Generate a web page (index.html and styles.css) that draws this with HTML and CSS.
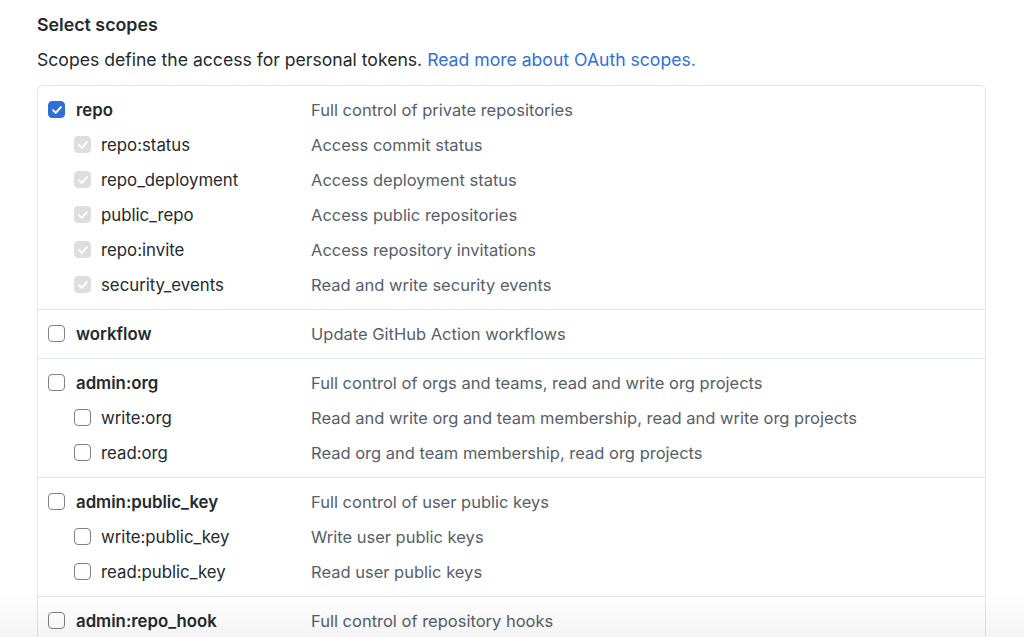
FILE: index.html
```html
<!DOCTYPE html>
<html lang="en">
<head>
<meta charset="utf-8">
<title>Select scopes</title>
<link rel="stylesheet" href="styles.css">
</head>
<body>
<main class="page">
  <h2 class="title">Select scopes</h2>
  <p class="lead">Scopes define the access for personal tokens. <a class="link" href="#">Read more about OAuth scopes.</a></p>

  <div class="scopes">
    <div class="group">
      <div class="row main">
        <div class="name"><span class="cb checked"><svg viewBox="0 0 16 16"><path d="M3.6 8.3l3 3 5.8-6.6"/></svg></span><span class="label">repo</span></div>
        <div class="desc">Full control of private repositories</div>
      </div>
      <div class="row sub">
        <div class="name"><span class="cb disabled"><svg viewBox="0 0 16 16"><path d="M3.6 8.3l3 3 5.8-6.6"/></svg></span><span class="label">repo:status</span></div>
        <div class="desc">Access commit status</div>
      </div>
      <div class="row sub">
        <div class="name"><span class="cb disabled"><svg viewBox="0 0 16 16"><path d="M3.6 8.3l3 3 5.8-6.6"/></svg></span><span class="label">repo_deployment</span></div>
        <div class="desc">Access deployment status</div>
      </div>
      <div class="row sub">
        <div class="name"><span class="cb disabled"><svg viewBox="0 0 16 16"><path d="M3.6 8.3l3 3 5.8-6.6"/></svg></span><span class="label">public_repo</span></div>
        <div class="desc">Access public repositories</div>
      </div>
      <div class="row sub">
        <div class="name"><span class="cb disabled"><svg viewBox="0 0 16 16"><path d="M3.6 8.3l3 3 5.8-6.6"/></svg></span><span class="label">repo:invite</span></div>
        <div class="desc">Access repository invitations</div>
      </div>
      <div class="row sub">
        <div class="name"><span class="cb disabled"><svg viewBox="0 0 16 16"><path d="M3.6 8.3l3 3 5.8-6.6"/></svg></span><span class="label">security_events</span></div>
        <div class="desc">Read and write security events</div>
      </div>
    </div>

    <div class="group">
      <div class="row main">
        <div class="name"><span class="cb"></span><span class="label">workflow</span></div>
        <div class="desc">Update GitHub Action workflows</div>
      </div>
    </div>

    <div class="group">
      <div class="row main">
        <div class="name"><span class="cb"></span><span class="label">admin:org</span></div>
        <div class="desc">Full control of orgs and teams, read and write org projects</div>
      </div>
      <div class="row sub">
        <div class="name"><span class="cb"></span><span class="label">write:org</span></div>
        <div class="desc">Read and write org and team membership, read and write org projects</div>
      </div>
      <div class="row sub">
        <div class="name"><span class="cb"></span><span class="label">read:org</span></div>
        <div class="desc">Read org and team membership, read org projects</div>
      </div>
    </div>

    <div class="group">
      <div class="row main">
        <div class="name"><span class="cb"></span><span class="label">admin:public_key</span></div>
        <div class="desc">Full control of user public keys</div>
      </div>
      <div class="row sub">
        <div class="name"><span class="cb"></span><span class="label">write:public_key</span></div>
        <div class="desc">Write user public keys</div>
      </div>
      <div class="row sub">
        <div class="name"><span class="cb"></span><span class="label">read:public_key</span></div>
        <div class="desc">Read user public keys</div>
      </div>
    </div>

    <div class="group">
      <div class="row main">
        <div class="name"><span class="cb"></span><span class="label">admin:repo_hook</span></div>
        <div class="desc">Full control of repository hooks</div>
      </div>
    </div>
  </div>
</main>
<div class="fade"></div>
</body>
</html>
```

FILE: styles.css
```css
html, body {
  margin: 0;
  padding: 0;
  background: #ffffff;
  overflow: hidden;
  height: 637px;
}

body {
  font-family: Inter, "Liberation Sans", Arial, sans-serif;
  color: #24292f;
  font-size: 16px;
}

.page {
  padding: 13px 38px 0 37px;
  width: 949px;
}

.title {
  margin: 0;
  font-size: 17.8px;
  line-height: 24px;
  font-weight: 600;
  color: #24292f;
}

.lead {
  margin: 11px 0 0 0;
  font-size: 17.6px;
  line-height: 24px;
  color: #24292f;
}

.link {
  color: #2f6fdb;
  text-decoration: none;
}

.scopes {
  margin-top: 13px;
  border: 1px solid #e1e4e8;
  border-radius: 6px;
}

.group {
  padding: 6px 0 7px 0;
  border-bottom: 1px solid #e1e4e8;
}

.group:last-child {
  border-bottom: none;
}

.row {
  display: flex;
  align-items: center;
  height: 35px;
  padding-left: 10px;
}

.name {
  display: flex;
  align-items: center;
  width: 263px;
  flex: none;
  box-sizing: border-box;
}

.row.sub .name {
  padding-left: 26px;
}

.label {
  margin-left: 11px;
  font-size: 16.8px;
  color: #24292f;
}

.row.sub .label {
  margin-left: 10px;
}

.row.main .label {
  font-weight: 600;
}

.desc {
  font-size: 16.5px;
  color: #57606a;
}

.cb {
  width: 17px;
  height: 17px;
  box-sizing: border-box;
  border: 1px solid #808080;
  border-radius: 4px;
  background: #ffffff;
  flex: none;
  display: flex;
  align-items: center;
  justify-content: center;
}

.cb svg {
  width: 14px;
  height: 14px;
  fill: none;
  stroke: #ffffff;
  stroke-width: 2.2;
  stroke-linecap: round;
  stroke-linejoin: round;
}

.cb.checked {
  background: #2f6fdb;
  border-color: #2f6fdb;
}

.cb.disabled {
  background: #dedede;
  border-color: #dedede;
}

.fade {
  position: fixed;
  left: 0;
  right: 0;
  bottom: 0;
  height: 44px;
  background: linear-gradient(to bottom, rgba(0, 0, 0, 0), rgba(0, 0, 0, 0.045));
  pointer-events: none;
}
```
